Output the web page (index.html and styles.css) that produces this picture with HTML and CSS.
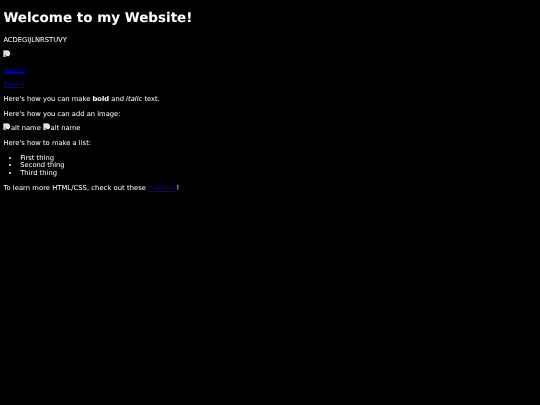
FILE: index.html
```html
<!DOCTYPE html>
<html lang="en">
<head>
<meta charset="utf-8">
<title>Welcome to my Website!</title>
<link rel="stylesheet" href="styles.css">
</head>
<body>
<h1>Welcome to my Website!</h1>
<p>ACDEGIJLNRSTUVY</p>
<p><svg class="broken" role="img" aria-label="broken image"><use href="#broken"/></svg></p>
<p><a href="#page2">page2</a></p>
<p><a href="#page3">page3</a></p>
<p>Here's how you can make <strong>bold</strong> and <em>italic</em> text.</p>
<p>Here's how you can add an image:</p>
<p><span class="img-alt"><svg class="broken" aria-hidden="true"><use href="#broken"/></svg>alt name</span> <span class="img-alt"><svg class="broken" aria-hidden="true"><use href="#broken"/></svg>alt name</span></p>
<p>Here's how to make a list:</p>
<ul>
  <li>First thing</li>
  <li>Second thing</li>
  <li>Third thing</li>
</ul>
<p class="outro">To learn more HTML/CSS, check out these <a href="#tutorials">tutorials</a>!</p>
<svg width="0" height="0" class="defs" aria-hidden="true">
  <symbol id="broken" viewBox="0 0 16 16">
    <path d="M1 1h10l4 4v5l-4 4-3-2-3 3H1z" fill="#fff"/>
    <path d="M2.500 2.500h8v3h3v3l-3 2-3-2-5 3z" fill="#cfe0f0"/>
    <path d="M2.500 12l3-3 3 2-4 3.500h-2z" fill="#5fae5f"/>
    <path d="M1 1h10l4 4v5M1 1v14h4" fill="none" stroke="#9a9a9a" stroke-width="1"/>
  </symbol>
</svg>
</body>
</html>
```
FILE: styles.css
```css
html {
  background: #000;
}
body {
  margin: 3.375px;
  color: #fff;
  font-family: "DejaVu Sans", sans-serif;
  font-size: 6.75px;
  line-height: 1.164;
  text-rendering: geometricPrecision;
  filter: blur(0.25px);
}
h1 {
  margin: 8px 0 10px;
}
p,
ul {
  margin: 6.850px 0;
}
.outro {
  letter-spacing: 0.05px;
}
.defs {
  position: absolute;
}
a {
  color: #0000b0;
  text-decoration-thickness: 0.6px;
}
ul {
  padding-left: 2.5em;
}
.broken {
  width: 7.500px;
  height: 7.500px;
  margin-top: -2px;
  vertical-align: top;
}
```
